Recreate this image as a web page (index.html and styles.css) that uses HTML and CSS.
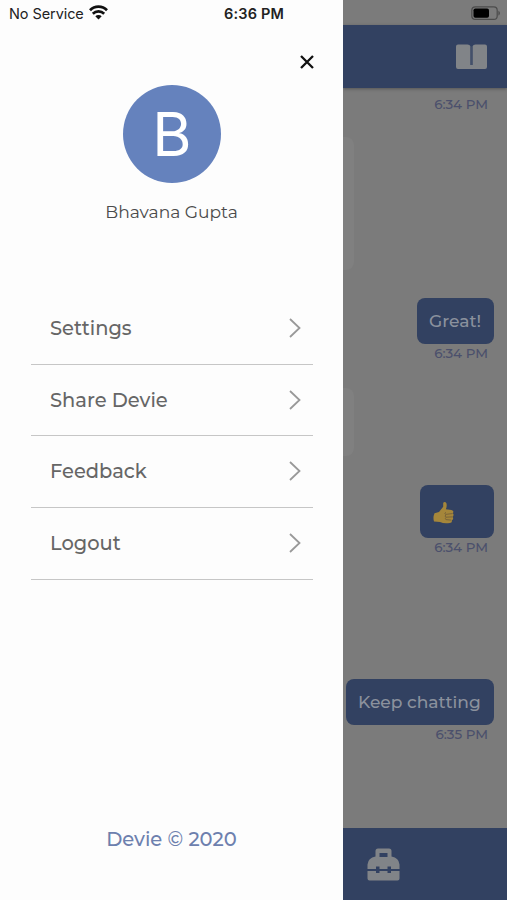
FILE: index.html
```html
<!DOCTYPE html>
<html lang="en">
<head>
<meta charset="utf-8">
<title>Devie</title>
<link rel="stylesheet" href="styles.css">
</head>
<body>
<div class="screen">
  <aside class="drawer">
    <div class="status">
      <span class="carrier">No Service</span>
      <svg class="wifi" width="19" height="15" viewBox="0 0 19 15"><g fill="none" stroke="#111" stroke-width="2.7"><path d="M1 5.200C5.700.5 13.300.5 18 5.200"/><path d="M3.800 8.700c3.200-3 8.200-3 11.400 0"/></g><path fill="#111" d="M6.300 11.300c1.700-1.600 4.700-1.600 6.400 0l-3.200 3.200z"/></svg>
      <span class="clock">6:36 PM</span>
    </div>
    <div class="close"><svg width="14" height="14" viewBox="0 0 14 14"><path d="M1 1l12 12M13 1L1 13" stroke="#111" stroke-width="2.3"/></svg></div>
    <div class="avatar"><span>B</span></div>
    <div class="name"><span>Bhavana Gupta</span></div>
    <nav class="menu">
      <a class="item"><span>Settings</span><svg width="12" height="20" viewBox="0 0 12 20"><path d="M1 1l9.500 9L1 19"/></svg></a>
      <a class="item"><span>Share Devie</span><svg width="12" height="20" viewBox="0 0 12 20"><path d="M1 1l9.500 9L1 19"/></svg></a>
      <a class="item"><span>Feedback</span><svg width="12" height="20" viewBox="0 0 12 20"><path d="M1 1l9.500 9L1 19"/></svg></a>
      <a class="item"><span>Logout</span><svg width="12" height="20" viewBox="0 0 12 20"><path d="M1 1l9.500 9L1 19"/></svg></a>
    </nav>
    <div class="copyright">Devie © 2020</div>
  </aside>
  <main class="chat">
    <div class="battery-row">
      <svg width="30" height="15" viewBox="0 0 30 15"><rect x=".8" y=".8" width="25.400" height="12.600" rx="3.500" fill="none" stroke="#4c4c4c" stroke-width="1.200"/><rect x="2.500" y="2.500" width="15.500" height="9.200" rx="1.800" fill="#000"/><path d="M27.400 4.700c2 .8 2 4 0 4.800z" fill="#4c4c4c"/></svg>
    </div>
    <header class="topbar">
      <svg width="31" height="25" viewBox="0 0 31 25"><path fill="#818488" d="M2 .5h9.500c1.500 0 2.500.7 3 2V21h2V2.500c.5-1.300 1.500-2 3-2H29q2 0 2 2V23q0 2-2 2H2q-2 0-2-2V2.500q0-2 2-2z"/><path d="M15.500 2.500V21" stroke="#43506a" stroke-width="2"/></svg>
    </header>
    <section class="messages">
      <time class="time cut">6:34 PM</time>
      <div class="reply tall"></div>
      <div class="bubble great"><span>Great!</span></div>
      <time class="time">6:34 PM</time>
      <div class="reply short"></div>
      <div class="bubble thumb">
        <svg width="22" height="23" viewBox="0 0 22 23"><path fill="#a5863a" d="M1.500 12.300L6 11l4.200-5.300V1.800q1.800-1.900 3.200.4.800 2.800-.5 6l5.500.8q2.200.5 2 2-.2 1-1 1.300 1.400.5 1.100 2-.2 1.200-1.100 1.600 1 .6.700 1.900-.3 1.100-1.200 1.400.5 2.600-2.100 2.700-5.600 1-9.800-.9L1 20.500q-1.300-4 .5-8.200z"/><path fill="none" stroke="#746039" stroke-width=".9" d="M13 11.400q-2.200.8-.5 2l6.800-.8M13 13.900q-1.700 1-.3 2.300l6.600-.3M13 16.600q-1.200.9-.1 2l5.400.5"/></svg>
      </div>
      <time class="time">6:34 PM</time>
      <div class="bubble keep"><span>Keep chatting</span></div>
      <time class="time">6:35 PM</time>
    </section>
    <footer class="tabbar">
      <svg width="33" height="33" viewBox="0 0 33 33"><path fill="#818488" fill-rule="evenodd" d="M8.500 8.500V3q0-2.500 2.500-2.500h11Q24.500.5 24.500 3v5.500q7.500 1.300 8 8V21H24v-2.500h-3.500V21h-8v-2.500H9V21H.5v-4.500q.5-6.700 8-8zM12.500 5v4h8V5zM.5 23H9v2h3.500v-2h8v2H24v-2h8.500v7.500q0 2-2 2h-28q-2 0-2-2z"/></svg>
    </footer>
  </main>
</div>
</body>
</html>
```

FILE: styles.css
```css
* { box-sizing: border-box; }
body { margin: 0; background: #7b7b7b; }
svg { display: block; flex: none; }
.screen {
  display: flex;
  width: 507px;
  height: 900px;
  overflow: hidden;
  font-family: Montserrat, "Open Sans", sans-serif;
}
.drawer {
  position: relative;
  z-index: 1;
  display: flex;
  flex-direction: column;
  width: 343px;
  height: 900px;
  background: #fdfdfd;
}
.status {
  display: flex;
  align-items: center;
  height: 27px;
  padding-left: 9px;
  font: 14.500px/27px Inter, sans-serif;
  color: #222;
}
.carrier { width: 75px; letter-spacing: -.08px; white-space: nowrap; }
.wifi { margin: -2px 0 0 5px; }
.clock { margin-left: 116px; font-weight: 600; letter-spacing: .2px; white-space: nowrap; }
.close { display: flex; justify-content: flex-end; padding: 28px 29px 0 0; }
.avatar {
  display: flex;
  align-items: center;
  justify-content: center;
  width: 98px;
  height: 98px;
  margin: 16px 0 0 123px;
  border-radius: 50%;
  background: #6582bd;
  color: #fff;
  font: 60px/98px Inter, sans-serif;
}
.name {
  margin-top: 17px;
  text-align: center;
  font-size: 17.100px;
  line-height: 24px;
  color: #4b4b4b;
}
.menu { width: 282px; margin: 69px 0 0 31px; }
.item {
  display: flex;
  align-items: center;
  justify-content: space-between;
  height: 71.700px;
  padding: 0 12px 1px 19px;
  border-bottom: 1.500px solid #c6c6c6;
  font-size: 19.450px;
  font-weight: 500;
  color: #666;
}
.item svg { fill: none; stroke: #999; stroke-width: 1.800; }
.copyright {
  margin: auto 0 47px;
  text-align: center;
  font-size: 19.500px;
  font-weight: 500;
  line-height: 28px;
  color: #6d80ae;
}
.chat {
  display: flex;
  flex-direction: column;
  width: 164px;
  background: #7b7b7b;
}
.battery-row { display: flex; justify-content: flex-end; height: 25px; padding: 6px 6px 0 0; }
.topbar {
  display: flex;
  justify-content: flex-end;
  height: 63px;
  padding: 19px 20px 0 0;
  background: #324161;
  box-shadow: 0 1px 3px #555;
}
.messages {
  display: flex;
  flex: 1;
  flex-direction: column;
  align-items: flex-end;
  padding: 8px 13px 0 0;
}
.time {
  height: 18px;
  margin-right: 6px;
  font-size: 13.400px;
  font-weight: 500;
  line-height: 18px;
  color: #4b506c;
  white-space: nowrap;
}
.cut { line-height: 16px; clip-path: inset(4px 0 0); }
.reply { align-self: flex-start; width: 11px; border-radius: 0 8px 8px 0; background: #808080; }
.tall { height: 133px; margin-top: 23px; }
.short { height: 68px; margin-top: 26px; }
.bubble {
  display: flex;
  align-items: center;
  height: 46px;
  padding: 0 0 1px 12px;
  border-radius: 8px;
  background: #324161;
  color: #8b919d;
  font-size: 17.100px;
  font-weight: 500;
  white-space: nowrap;
}
.great { width: 77px; margin-top: 28px; }
.thumb { width: 74px; height: 53px; padding: 2px 0 0 13px; margin-top: 29px; }
.keep { width: 148px; margin-top: 123px; }
.tabbar { height: 72px; padding: 20px 0 0 24px; background: #324161; }
```
